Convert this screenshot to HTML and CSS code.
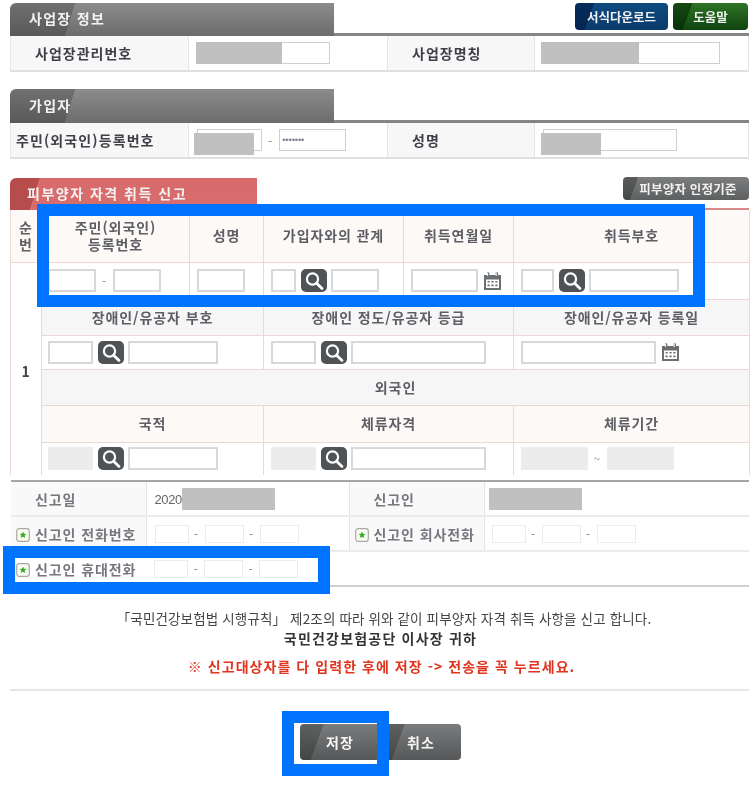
FILE: index.html
```html
<!DOCTYPE html>
<html lang="ko">
<head>
<meta charset="utf-8">
<title>피부양자 자격 취득 신고</title>
<link rel="stylesheet" href="styles.css">
</head>
<body>
<svg class="defs" width="0" height="0" aria-hidden="true">
  <symbol id="mag" viewBox="0 0 26 23">
    <circle cx="11.5" cy="10" r="5.6" fill="none" stroke="#fff" stroke-width="2.2"/>
    <path d="M15.6 14.2 L21 19.4" stroke="#fff" stroke-width="2.8" stroke-linecap="round"/>
  </symbol>
  <symbol id="cal" viewBox="0 0 19 18">
    <path d="M1 3h17v15H1z" fill="#6b6f72"/>
    <path d="M4 0.5h2.4v5H4zM12.6 0.5H15v5h-2.4z" fill="#6b6f72"/>
    <path d="M4.6 1v3M13.2 1v3" stroke="#fff" stroke-width="1"/>
    <path d="M3 7.5h13v8.5H3z" fill="#fff"/>
    <path d="M4.5 9h2.2v1.6H4.5zM8.4 9h2.2v1.6H8.4zM12.3 9h2.2v1.6h-2.2zM4.5 12.6h2.2v1.6H4.5zM8.4 12.6h2.2v1.6H8.4zM12.3 12.6h2.2v1.6h-2.2z" fill="#6b6f72"/>
  </symbol>
  <symbol id="star" viewBox="0 0 14 14">
    <rect x="0.7" y="0.7" width="12.6" height="12.6" rx="2.5" fill="#fbfbf6" stroke="#a9a99d" stroke-width="1.2"/>
    <path d="M7 3.4l1 2.3 2.5.2-1.9 1.6.6 2.5L7 8.700l-2.200 1.300.6-2.500-1.900-1.600 2.500-.2z" fill="#2fae1e"/>
  </symbol>
</svg>

<div class="page">
  <section class="sec sec-first">
    <div class="head">
      <h2 class="tab">사업장 정보</h2>
      <div class="head-btns">
        <a class="mini mini-blue">서식다운로드</a>
        <a class="mini mini-green">도움말</a>
      </div>
    </div>
    <div class="info">
      <div class="info-th th-a">사업장관리번호</div>
      <div class="info-td td-a"><span class="field w134"><i class="mask m86"></i></span></div>
      <div class="info-th th-b">사업장명칭</div>
      <div class="info-td td-b"><span class="field w179"><i class="mask m98"></i></span></div>
    </div>
  </section>

  <section class="sec sec-second">
    <div class="head">
      <h2 class="tab tab-tall">가입자</h2>
    </div>
    <div class="info">
      <div class="info-th th-a th-tight">주민(외국인)등록번호</div>
      <div class="info-td td-a">
        <span class="field w65 shift-one"><i class="mask m60 mask-low"></i></span>
        <span class="dash dash-wide">-</span>
        <span class="field w67 dots">•••••••</span>
      </div>
      <div class="info-th th-b">성명</div>
      <div class="info-td td-b"><span class="field w134 shift-two"><i class="mask m60 mask-name-low"></i></span></div>
    </div>
  </section>

  <section class="sec sec-third">
    <div class="head head-red">
      <h2 class="tab tab-red">피부양자 자격 취득 신고</h2>
      <a class="mini mini-gray">피부양자 인정기준</a>
    </div>
    <table class="form">
      <colgroup>
        <col class="c0"><col class="c1"><col class="c2"><col class="c3"><col class="c4"><col class="c5">
      </colgroup>
      <tr class="r1">
        <th class="pink">순<br>번</th>
        <th class="pink">주민(외국인)<br>등록번호</th>
        <th class="pink">성명</th>
        <th class="pink">가입자와의 관계</th>
        <th class="pink">취득연월일</th>
        <th class="pink">취득부호</th>
      </tr>
      <tr class="r2">
        <td rowspan="6" class="num">1</td>
        <td><div class="cell lead"><input class="box w48"><span class="dash">-</span><input class="box w48"></div></td>
        <td><div class="cell"><input class="box w48"></div></td>
        <td><div class="cell"><input class="box w25"><a class="find"><svg width="26" height="23"><use href="#mag"/></svg></a><input class="box w48"></div></td>
        <td><div class="cell"><input class="box w67"><svg class="cal" width="19" height="18"><use href="#cal"/></svg></div></td>
        <td><div class="cell"><input class="box w33"><a class="find"><svg width="26" height="23"><use href="#mag"/></svg></a><input class="box w90"></div></td>
      </tr>
      <tr class="r3">
        <th colspan="2" class="grey">장애인/유공자 부호</th>
        <th colspan="2" class="grey">장애인 정도/유공자 등급</th>
        <th class="grey">장애인/유공자 등록일</th>
      </tr>
      <tr class="r4">
        <td colspan="2"><div class="cell lead"><input class="box w45"><a class="find"><svg width="26" height="23"><use href="#mag"/></svg></a><input class="box w90"></div></td>
        <td colspan="2"><div class="cell"><input class="box w45"><a class="find"><svg width="26" height="23"><use href="#mag"/></svg></a><input class="box w135"></div></td>
        <td><div class="cell"><input class="box w135"><svg class="cal" width="19" height="18"><use href="#cal"/></svg></div></td>
      </tr>
      <tr class="r5">
        <th colspan="5" class="grey">외국인</th>
      </tr>
      <tr class="r6">
        <th colspan="2" class="pink">국적</th>
        <th colspan="2" class="pink">체류자격</th>
        <th class="pink">체류기간</th>
      </tr>
      <tr class="r7">
        <td colspan="2"><div class="cell lead"><input class="box w45 off" disabled><a class="find"><svg width="26" height="23"><use href="#mag"/></svg></a><input class="box w90"></div></td>
        <td colspan="2"><div class="cell"><input class="box w45 off" disabled><a class="find"><svg width="26" height="23"><use href="#mag"/></svg></a><input class="box w135"></div></td>
        <td><div class="cell"><input class="box w67 off" disabled><span class="tilde">~</span><input class="box w67 off" disabled></div></td>
      </tr>
    </table>
  </section>

  <table class="report">
    <colgroup><col class="rc1"><col class="rc2"><col class="rc3"><col class="rc4"></colgroup>
    <tr>
      <th>신고일</th>
      <td><span class="date">2020</span><i class="mask-inline"></i></td>
      <th>신고인</th>
      <td><i class="mask-inline mask-name"></i></td>
    </tr>
    <tr>
      <th class="starred"><svg width="14" height="14"><use href="#star"/></svg>신고인 전화번호</th>
      <td><div class="phones nudge"><input class="tel t34"><span class="dash">-</span><input class="tel t39"><span class="dash">-</span><input class="tel t39"></div></td>
      <th class="starred"><svg width="14" height="14"><use href="#star"/></svg>신고인 회사전화</th>
      <td><div class="phones"><input class="tel t34"><span class="dash">-</span><input class="tel t39"><span class="dash">-</span><input class="tel t39"></div></td>
    </tr>
    <tr class="last">
      <th class="starred plain"><svg width="14" height="14"><use href="#star"/></svg>신고인 휴대전화</th>
      <td colspan="3"><div class="phones nudge"><input class="tel t34"><span class="dash">-</span><input class="tel t39"><span class="dash">-</span><input class="tel t39"></div></td>
    </tr>
  </table>

  <div class="notice">
    <p class="law">「국민건강보험법 시행규칙」 제2조의 따라 위와 같이 피부양자 자격 취득 사항을 신고 합니다.</p>
    <p class="to">국민건강보험공단 이사장 귀하</p>
    <p class="warn">※ 신고대상자를 다 입력한 후에 저장 -&gt; 전송을 꼭 누르세요.</p>
  </div>

  <div class="actions">
    <a class="act">저장</a>
    <a class="act">취소</a>
  </div>
</div>

<div class="mark mark-a"></div>
<div class="mark mark-b"></div>
<div class="mark mark-c"></div>
</body>
</html>
```

FILE: styles.css
```css
* { box-sizing: border-box; }
html, body { margin: 0; padding: 0; background: #fff; }
body {
  position: relative;
  width: 756px;
  height: 786px;
  overflow: hidden;
  font-family: "Noto Sans CJK KR", "Noto Sans", sans-serif;
  color: #444;
}
.defs { position: absolute; }
.page {
  width: 756px;
  padding: 3px 7px 0 10px;
  filter: blur(0.35px);
}
h2, p { margin: 0; }

/* section heads */
.sec-second { margin-top: 17px; }
.sec-third { margin-top: 19px; }
.head {
  display: flex;
  justify-content: space-between;
  align-items: flex-start;
  height: 33px;
  border-bottom: 3px solid #858585;
}
.sec-second .head { height: 34px; }
.head-red { height: 32px; border-bottom: 2px solid #d98a8a; }
.tab {
  display: flex;
  align-items: center;
  width: 324px;
  height: 33px;
  padding: 0 0 3px 19px;
  font-size: 14px;
  font-weight: 700;
  letter-spacing: 1.300px;
  color: #f2f2f2;
  border-radius: 6px 0 0 0;
  background:
    linear-gradient(107deg, rgba(40,40,40,.28) 62px, transparent 62.500px),
    linear-gradient(#8b8c8d, #6c6c6c);
}
.tab-tall { height: 34px; }
.tab-red {
  width: 247px;
  height: 32px;
  padding: 0 0 2px 17px;
  letter-spacing: 1.500px;
  background:
    linear-gradient(107deg, rgba(130,30,30,.4) 28px, transparent 28.500px),
    linear-gradient(#d86a6a, #d96d6d);
}
.head-btns { display: flex; gap: 5px; margin-right: 1px; }
.mini {
  display: flex;
  align-items: center;
  justify-content: center;
  height: 27px;
  border-radius: 4px;
  font-size: 12.500px;
  font-weight: 700;
  color: #f1f1f1;
}
.mini-blue {
  width: 93px;
  background:
    linear-gradient(110deg, rgba(0,20,60,.55) 18px, transparent 18.500px),
    linear-gradient(#0e4a80, #0a3a6b);
}
.mini-green {
  width: 75px;
  background:
    linear-gradient(110deg, rgba(0,30,0,.5) 18px, transparent 18.500px),
    linear-gradient(#2f7426, #0f4410);
}
.mini-gray {
  width: 126px;
  height: 23px;
  margin-top: -1px;
  padding-left: 4px;
  font-size: 12.500px;
  letter-spacing: .2px;
  border-radius: 4px;
  background:
    linear-gradient(110deg, rgba(30,30,30,.35) 14px, transparent 14.500px),
    linear-gradient(#7b7d7e, #5d5f60);
}

/* info rows */
.info {
  display: grid;
  grid-template-columns: 177px 200px 146px 214px;
  height: 36px;
  border-bottom: 2px solid #e0e0e0;
  border-left: 1px solid #e6e6e6;
  border-right: 1px solid #e6e6e6;
}
.info-th {
  display: flex;
  align-items: center;
  background: #f7f7f7;
  font-size: 14px;
  font-weight: 700;
  letter-spacing: 1px;
  color: #3f3f4a;
}
.th-a { padding-left: 24px; }
.th-b { padding-left: 24px; }
.sec-second .th-b { padding-left: 24px; }
.sec-second .th-tight { letter-spacing: 1.100px; padding-left: 5px; }
.info-td {
  display: flex;
  align-items: center;
  border-left: 1px solid #e4e4e4;
  padding-left: 7px;
}
.td-a { border-right: 1px solid #e4e4e4; }
.td-b { padding-left: 6px; }
.field {
  position: relative;
  display: block;
  height: 22px;
  border: 1px solid #cfcfcf;
  background: #fff;
}
.w134 { width: 134px; }
.w179 { width: 179px; }
.w65 { width: 65px; }
.w67 { width: 67px; }
.shift-one { margin-left: 1px; }
.shift-two { margin-left: 2px; }
.mask {
  position: absolute;
  left: -1px;
  top: -1px;
  height: 22px;
  background: #c0c0c0;
}
.m86 { width: 86px; }
.m98 { width: 98px; }
.m60 { width: 60px; }
.mask-low { top: 3px; left: -4px; }
.mask-name-low { top: 3px; left: -3px; }
.dots {
  font-size: 9px;
  line-height: 20px;
  padding-left: 2px;
  letter-spacing: 0;
  color: #7a7a90;
  font-family: "Liberation Sans", sans-serif;
}
.dash {
  margin: 0 5px;
  font-size: 12px;
  color: #888;
}
.dash-wide { margin: 0 7px 0 6px; }

/* form */
.form {
  width: 739px;
  border-collapse: collapse;
  table-layout: fixed;
}
.c0 { width: 31px; }
.c1 { width: 148px; }
.c2 { width: 74px; }
.c3 { width: 140px; }
.c4 { width: 110px; }
.c5 { width: 236px; }
.form th, .form td {
  padding: 0;
  border: 1px solid #efd5d5;
  font-size: 14px;
  letter-spacing: .9px;
  line-height: 17px;
  color: #5e5e66;
}
.form tr:first-child th { border-top: 0; }
.form tr:last-child td, .form .num { border-bottom: 0; }
.pink { background: #fdf9f7; }
.grey { background: #f6f6f6; }
.r1 { height: 52px; }
.r2 { height: 37px; }
.r3 { height: 36px; }
.r4 { height: 34px; }
.r5 { height: 36px; }
.r6 { height: 37px; }
.r7 { height: 33px; }
.form .num { padding-top: 5px; text-align: center; font-weight: 700; color: #444; background: #fff; }
.cell {
  display: flex;
  align-items: center;
  gap: 5px;
  padding-left: 7px;
}
.lead { padding-left: 6px; }
.box {
  height: 23px;
  padding: 0;
  border: 2px solid #d8d8d8;
  background: #fff;
  border-radius: 0;
}
.off { background: #ececec; border-color: #ececec; }
.w25 { width: 25px; }
.w33 { width: 33px; }
.w45 { width: 45px; }
.w48 { width: 48px; }
.w90 { width: 90px; }
.w135 { width: 135px; }
.box.w67 { width: 67px; }
.find {
  display: block;
  flex: none;
  width: 26px;
  height: 23px;
  margin-right: -1px;
  border-radius: 5px;
  background: #4f5356;
}
.find svg { display: block; }
.cal { flex: none; }
.tilde { font-size: 11px; color: #888; margin: 0 2px 0 1px; letter-spacing: 0; }
.cell .dash { margin: 0; width: 7px; text-align: center; }

/* report */
.report {
  width: 738px;
  margin: 5px 0 0 1px;
  border-collapse: collapse;
  table-layout: fixed;
  border-top: 2px solid #a5a5a5;
}
.rc1 { width: 135px; }
.rc2 { width: 203px; }
.rc3 { width: 135px; }
.rc4 { width: 265px; }
.report tr { height: 35px; }
.report th, .report td {
  padding: 0;
  border-bottom: 2px solid #ececec;
  font-size: 14px;
  letter-spacing: .9px;
  color: #77777f;
}
.report th { padding-left: 24px; text-align: left; background: #f9f9f9; border-right: 1px solid #e4e4e4; }
.report td { padding-left: 7px; border-right: 0; }
.report td + th { border-left: 1px solid #e4e4e4; }
.report .last th, .report .last td { border-bottom: 2px solid #cfcfcf; }
.report .plain { background: #fff; border-right: 0; }
.report .starred { padding-left: 5px; white-space: nowrap; }
.starred svg { vertical-align: -2px; margin-right: 5px; }
.date { font-family: "Liberation Sans", sans-serif; font-size: 13px; letter-spacing: -.4px; color: #666; vertical-align: middle; margin-left: 1px; }
.mask-inline {
  display: inline-block;
  width: 93px;
  height: 22px;
  background: #c0c0c0;
  vertical-align: middle;
}
.mask-name { margin-left: -3px; }
.phones { display: flex; align-items: center; }
.nudge { margin-left: 1px; }
.tel {
  height: 18px;
  padding: 0;
  border: 1px solid #ececec;
  background: #fff;
  border-radius: 0;
}
.t34 { width: 34px; }
.t39 { width: 39px; }
.phones .dash { width: 16px; margin: 0; text-align: center; line-height: 12px; }

/* notice */
.notice {
  height: 104px;
  border-bottom: 2px solid #e6e6e6;
  text-align: center;
  padding-top: 21px;
}
.law { font-size: 13.500px; line-height: 20px; letter-spacing: .15px; color: #444; padding-left: 9px; white-space: nowrap; }
.to { font-size: 14px; font-weight: 700; line-height: 20px; color: #333; letter-spacing: 1.200px; padding-left: 2px; }
.warn { margin-top: 8px; padding-left: 4px; font-size: 14px; font-weight: 700; line-height: 20px; color: #e0341f; letter-spacing: 1.050px; }

.actions {
  display: flex;
  justify-content: center;
  gap: 1px;
  margin-top: 33px;
  padding-left: 2px;
}
.act {
  display: flex;
  align-items: center;
  justify-content: center;
  width: 80px;
  height: 36px;
  border-radius: 4px;
  font-size: 14px;
  font-weight: 700;
  letter-spacing: 1px;
  color: #f5f5f5;
  background:
    linear-gradient(110deg, rgba(30,30,30,.3) 22px, transparent 22.500px),
    linear-gradient(#7a7c7d, #555758);
}

/* blue annotation frames */
.mark {
  position: absolute;
  border: 12px solid #0074ff;
}
.mark-a { left: 37px; top: 204px; width: 668px; height: 103px; }
.mark-b { left: 3px; top: 546px; width: 327px; height: 48px; }
.mark-c { left: 282px; top: 711px; width: 107px; height: 65px; }
```
